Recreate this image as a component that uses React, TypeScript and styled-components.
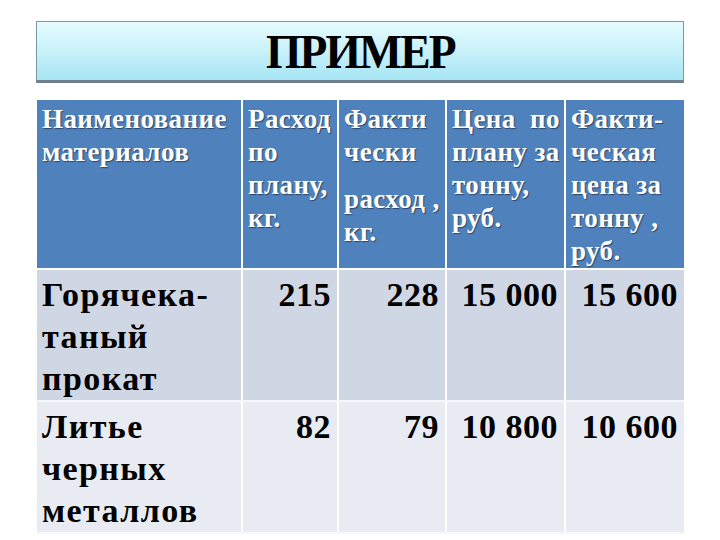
import React from 'react'
import styled, { createGlobalStyle } from 'styled-components'

const serif = `"Liberation Serif", "Times New Roman", "DejaVu Serif", serif`

const GlobalStyle = createGlobalStyle`
  html, body {
    margin: 0;
    padding: 0;
    background: #ffffff;
    font-family: ${serif};
  }
  table, th, td, h1 {
    font-family: ${serif};
  }
`

const Page = styled.div`
  width: 720px;
  height: 540px;
  box-sizing: border-box;
  padding: 21px 36px 0 36px;
  font-family: ${serif};
`

const TitleBox = styled.div`
  width: 648px;
  height: 62px;
  box-sizing: border-box;
  display: flex;
  align-items: center;
  justify-content: center;
  background: linear-gradient(180deg, #e6fcff 0%, #c9f1fa 50%, #a6e5f4 100%);
  border: 1px solid #7b97a4;
  border-bottom: 3px solid #6f7f8c;
`

const Title = styled.h1`
  margin: 0;
  padding-top: 2px;
  font-family: ${serif};
  font-size: 48px;
  font-weight: bold;
  letter-spacing: -2px;
  color: #000;
  line-height: 1;
  transform: scaleX(0.95);
`

const Table = styled.table`
  margin-top: 17px;
  margin-left: 1px;
  width: 647px;
  border-collapse: collapse;
  table-layout: fixed;
  font-family: ${serif};
`

const HeadCell = styled.th<{ $w: number }>`
  width: ${p => p.$w}px;
  height: 167px;
  box-sizing: border-box;
  background: #4f81bd;
  color: #ffffff;
  font-family: ${serif};
  font-size: 27px;
  font-weight: bold;
  line-height: 33px;
  letter-spacing: 0.4px;
  text-align: left;
  vertical-align: top;
  padding: 3px 2px 0 5px;
  border-left: 2px solid #ffffff;
  border-bottom: 2px solid #ffffff;
  text-shadow: 1px 1px 1px rgba(0, 0, 0, 0.45);
  white-space: nowrap;
  &:first-child {
    border-left: none;
  }
`

const Row = styled.tr<{ $alt?: boolean }>`
  background: ${p => (p.$alt ? '#e8ecf2' : '#d0d7e4')};
`

const Cell = styled.td<{ $num?: boolean; $h: number }>`
  height: ${p => p.$h}px;
  box-sizing: border-box;
  font-family: ${serif};
  font-size: 34px;
  font-weight: bold;
  line-height: 42px;
  letter-spacing: ${p => (p.$num ? '0.5px' : '1.4px')};
  color: #000;
  vertical-align: top;
  text-align: ${p => (p.$num ? 'right' : 'left')};
  padding: ${p => (p.$num ? '4px 6px 0 0' : '4px 0 0 5px')};
  border-left: 2px solid #ffffff;
  border-bottom: 2px solid #f4f6f9;
  white-space: nowrap;
  &:first-child {
    border-left: none;
  }
`

const Gap = styled.span`
  display: block;
  height: 14px;
`

const widths = [205, 96, 108, 119, 119]

const rows = [
  { name: ['Горячека-', 'таный', 'прокат'], vals: ['215', '228', '15 000', '15 600'], h: 129 },
  { name: ['Литье', 'черных', 'металлов'], vals: ['82', '79', '10 800', '10 600'], h: 127 },
]

const App: React.FC = () => {
  return (
    <Page>
      <GlobalStyle />
      <TitleBox>
        <Title>ПРИМЕР</Title>
      </TitleBox>
      <Table>
        <thead>
          <tr>
            <HeadCell $w={widths[0]}>
              Наименование<br />материалов
            </HeadCell>
            <HeadCell $w={widths[1]}>
              Расход<br />по<br />плану,<br />кг.
            </HeadCell>
            <HeadCell $w={widths[2]}>
              Факти<br />чески<br />
              <Gap />
              расход ,<br />кг.
            </HeadCell>
            <HeadCell $w={widths[3]}>
              Цена&nbsp;&nbsp;по<br />плану за<br />тонну,<br />руб.
            </HeadCell>
            <HeadCell $w={widths[4]}>
              Факти-<br />ческая<br />цена за<br />тонну ,<br />руб.
            </HeadCell>
          </tr>
        </thead>
        <tbody>
          {rows.map((r, i) => (
            <Row key={i} $alt={i === 1}>
              <Cell $h={r.h}>
                {r.name.map((l, j) => (
                  <React.Fragment key={j}>
                    {l}
                    {j < r.name.length - 1 && <br />}
                  </React.Fragment>
                ))}
              </Cell>
              {r.vals.map((v, j) => (
                <Cell key={j} $num $h={r.h}>
                  {v}
                </Cell>
              ))}
            </Row>
          ))}
        </tbody>
      </Table>
    </Page>
  )
}

export default App
